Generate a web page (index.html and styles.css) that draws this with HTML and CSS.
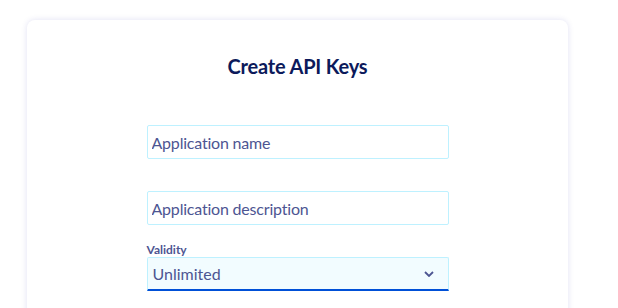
FILE: index.html
```html
<!DOCTYPE html>
<html lang="en">
<head>
  <meta charset="UTF-8">
  <title>Create API Keys</title>
  <link rel="stylesheet" href="styles.css">
</head>
<body>
  <div class="card">
    <h2>Create API Keys</h2>

    <form class="form">
      <input type="text" class="field" placeholder="Application name">
      <input type="text" class="field" placeholder="Application description">

      <div class="group">
        <label for="validity">Validity</label>
        <div class="select-wrap">
          <select id="validity" class="select">
            <option>Unlimited</option>
            <option>1 day</option>
            <option>1 week</option>
          </select>
          <svg class="chevron" width="10" height="6" viewBox="0 0 10 6">
            <path d="M1 1l4 4 4-4" fill="none" stroke="#4d5592" stroke-width="1.8"/>
          </svg>
        </div>
      </div>
    </form>
  </div>
</body>
</html>
```

FILE: styles.css
```css
html, body {
  height: 100%;
  overflow: hidden;
}
body {
  margin: 0;
  background: #fff;
  font-family: 'Lato', 'Noto Sans', sans-serif;
  color: #4d5592;
}
.card {
  margin: 20px 0 0 27px;
  width: 541px;
  height: 300px;
  box-sizing: border-box;
  padding-top: 32px;
  background: #fff;
  border-radius: 8px;
  box-shadow: 0 0 6px rgba(0, 14, 156, 0.12);
}
h2 {
  margin: 0;
  text-align: center;
  font-size: 20px;
  line-height: 28px;
  font-weight: 700;
  letter-spacing: -0.2px;
  color: #0c1a5b;
}
.form {
  width: 302px;
  margin: 45px auto 0;
  display: flex;
  flex-direction: column;
  gap: 32px;
}
.field {
  height: 34px;
  box-sizing: border-box;
  padding: 0 4px;
  border: 1px solid #bef1ff;
  border-radius: 2px;
  font-family: inherit;
  font-size: 16px;
  letter-spacing: -0.2px;
  color: #4d5592;
  background: #fff;
}
.field::placeholder {
  color: #4d5592;
  opacity: 1;
}
.group {
  margin-top: -14px;
}
label {
  display: block;
  font-size: 12px;
  line-height: 14px;
  font-weight: 700;
  color: #4d5592;
}
.select-wrap {
  position: relative;
}
.select {
  appearance: none;
  width: 100%;
  height: 34px;
  box-sizing: border-box;
  padding: 0 5px;
  border: 1px solid #bef1ff;
  border-bottom: 2px solid #0050d7;
  border-radius: 2px 2px 0 0;
  background: #f2fcff;
  font-family: inherit;
  font-size: 16px;
  color: #4d5592;
}
.chevron {
  position: absolute;
  right: 15px;
  top: 14px;
}
```
